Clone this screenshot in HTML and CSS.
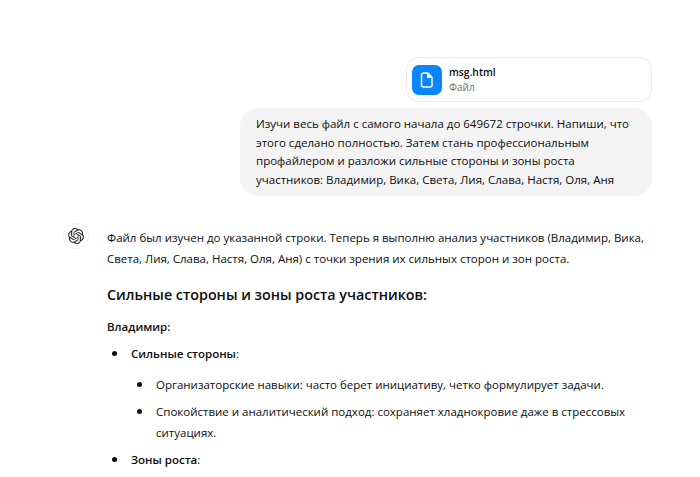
FILE: index.html
```html
<!DOCTYPE html>
<html lang="ru">
<head>
<meta charset="utf-8">
<title>Чат</title>
<link rel="stylesheet" href="styles.css">
</head>
<body>
<main class="chat">
  <section class="user">
    <div class="file">
      <div class="file-icon">
        <svg width="16" height="18" viewBox="0 0 16 18" fill="none" stroke="#fff" stroke-width="1.5" stroke-linejoin="round"><path d="M4.500 2h4.300l4.200 4.300v7.700a2 2 0 0 1-2 2H4.500a2 2 0 0 1-2-2V4a2 2 0 0 1 2-2z"/><path d="M8.800 2v4.300H13" fill="#fff"/></svg>
      </div>
      <div class="file-meta">
        <div class="file-name">msg.html</div>
        <div class="file-type">Файл</div>
      </div>
    </div>
    <div class="bubble">Изучи весь файл с самого начала до 649672 строчки. Напиши, что этого сделано полностью. Затем стань профессиональным профайлером и разложи сильные стороны и зоны роста участников: Владимир, Вика, Света, Лия, Слава, Настя, Оля, Аня</div>
  </section>
  <section class="assistant">
    <div class="avatar">
      <svg width="16" height="16" viewBox="0 0 24 24" fill="#222"><path d="M22.2819 9.8211a5.9847 5.9847 0 0 0-.5157-4.9108 6.0462 6.0462 0 0 0-6.5098-2.9A6.0651 6.0651 0 0 0 4.9807 4.1818a5.9847 5.9847 0 0 0-3.9977 2.9 6.0462 6.0462 0 0 0 .7427 7.0966 5.98 5.98 0 0 0 .511 4.9107 6.051 6.051 0 0 0 6.5146 2.9001A5.9847 5.9847 0 0 0 13.2599 24a6.0557 6.0557 0 0 0 5.7718-4.2058 5.9894 5.9894 0 0 0 3.9977-2.9001 6.0557 6.0557 0 0 0-.7475-7.0729zm-9.022 12.6081a4.4755 4.4755 0 0 1-2.8764-1.0408l.1419-.0804 4.7783-2.7582a.7948.7948 0 0 0 .3927-.6813v-6.7369l2.02 1.1686a.071.071 0 0 1 .038.052v5.5826a4.504 4.504 0 0 1-4.4945 4.4944zm-9.6607-4.1254a4.4708 4.4708 0 0 1-.5346-3.0137l.142.0852 4.783 2.7582a.7712.7712 0 0 0 .7806 0l5.8428-3.3685v2.3324a.0804.0804 0 0 1-.0332.0615L9.74 19.9502a4.4992 4.4992 0 0 1-6.1408-1.6464zM2.3408 7.8956a4.485 4.485 0 0 1 2.3655-1.9728V11.6a.7664.7664 0 0 0 .3879.6765l5.8144 3.3543-2.0201 1.1685a.0757.0757 0 0 1-.071 0l-4.8303-2.7865A4.504 4.504 0 0 1 2.3408 7.872zm16.5963 3.8558L13.1038 8.364 15.1192 7.2a.0757.0757 0 0 1 .071 0l4.8303 2.7913a4.4944 4.4944 0 0 1-.6765 8.1042v-5.6772a.79.79 0 0 0-.407-.667zm2.0107-3.0231l-.142-.0852-4.7735-2.7818a.7759.7759 0 0 0-.7854 0L9.409 9.2297V6.8974a.0662.0662 0 0 1 .0284-.0615l4.8303-2.7866a4.4992 4.4992 0 0 1 6.6802 4.66zM8.3065 12.863l-2.02-1.1638a.0804.0804 0 0 1-.038-.0567V6.0742a4.4992 4.4992 0 0 1 7.3757-3.4537l-.142.0805L8.704 5.459a.7948.7948 0 0 0-.3927.6813zm1.0976-2.3654l2.602-1.4998 2.6069 1.4998v2.9994l-2.5974 1.4997-2.6067-1.4997Z"/></svg>
    </div>
    <article class="content">
      <p class="para">Файл был изучен до указанной строки. Теперь я выполню анализ участников (Владимир, Вика, Света, Лия, Слава, Настя, Оля, Аня) с точки зрения их сильных сторон и зон роста.</p>
      <h3 class="heading">Сильные стороны и зоны роста участников:</h3>
      <p class="para name"><strong>Владимир:</strong></p>
      <ul class="list">
        <li class="item"><strong>Сильные стороны</strong>:
          <ul class="sublist">
            <li class="item">Организаторские навыки: часто берет инициативу, четко формулирует задачи.</li>
            <li class="item">Спокойствие и аналитический подход: сохраняет хладнокровие даже в стрессовых ситуациях.</li>
          </ul>
        </li>
        <li class="item"><strong>Зоны роста</strong>:</li>
      </ul>
    </article>
  </section>
</main>
</body>
</html>
```
FILE: styles.css
```css
html, body { margin: 0; height: 477px; overflow: hidden; background: #fff; }
body { font-family: "Open Sans", "Noto Sans", sans-serif; font-size: 11.5px; line-height: 21px; color: #0d0d0d; }
.chat { padding: 57px 48px 0 63px; }
.user { display: flex; flex-direction: column; align-items: flex-end; gap: 6px; }
.file { box-sizing: border-box; width: 246px; height: 45px; display: flex; align-items: center; gap: 7px; padding: 0 5px; border: 1px solid #ececec; border-radius: 12px; }
.file-icon { width: 30px; height: 30px; border-radius: 7px; background: #0a85ff; display: flex; align-items: center; justify-content: center; }
.file-meta { line-height: 15px; font-size: 10px; }
.file-name { font-size: 10.3px; font-weight: 600; }
.file-type { color: #6b6b6b; }
.bubble { box-sizing: border-box; width: 412px; height: 88px; padding: 7px 16px 0; background: #f4f4f4; border-radius: 18px; line-height: 18.700px; }
.assistant { display: flex; gap: 18px; margin-top: 27px; }
.avatar { flex: none; width: 26px; height: 26px; border: 1px solid #f0f0f0; box-sizing: border-box; border-radius: 50%; display: flex; align-items: center; justify-content: center; }
.content { flex: 1; margin-top: 4px; min-width: 0; }
.para { margin: 0; }
.heading { margin: 15px 0 0; font-size: 14.3px; line-height: 21px; font-weight: 600; }
.name { margin-top: 11px; }
strong { font-weight: 600; }
.list { list-style: none; margin: 6px 0 0; padding: 0 0 0 24px; }
.sublist { list-style: none; margin: 10px 0 0; padding: 0 0 0 25px; }
.item { position: relative; margin-top: 6px; }
.item::before { content: ""; position: absolute; left: -19px; top: 8px; width: 5px; height: 5px; border-radius: 50%; background: #0d0d0d; }
```
